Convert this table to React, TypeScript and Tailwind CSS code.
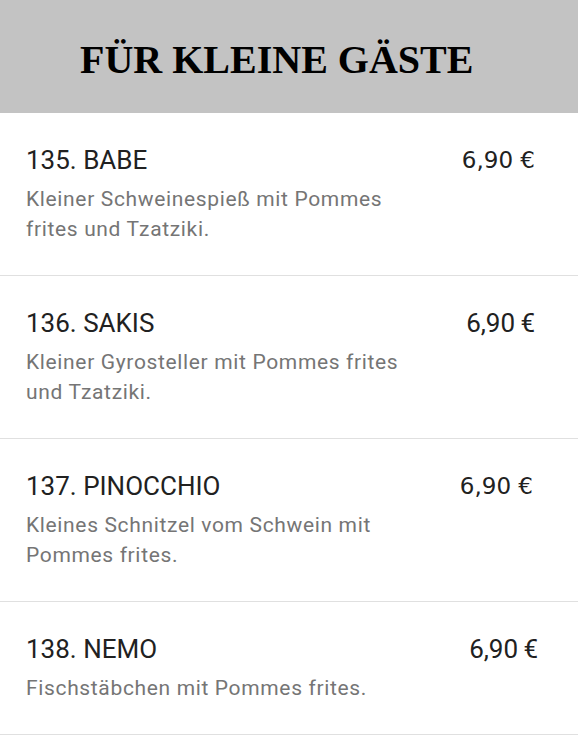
import React from "react";

type Item = {
  title: string;
  desc: string;
  price: string;
  priceFont: "dejavu" | "roboto";
  pr: string;
};

const items: Item[] = [
  {
    title: "135. BABE",
    desc: "Kleiner Schweinespieß mit Pommes frites und Tzatziki.",
    price: "6,90 €",
    priceFont: "dejavu",
    pr: "pr-[43px]",
  },
  {
    title: "136. SAKIS",
    desc: "Kleiner Gyrosteller mit Pommes frites und Tzatziki.",
    price: "6,90\u2009€",
    priceFont: "roboto",
    pr: "pr-[43px]",
  },
  {
    title: "137. PINOCCHIO",
    desc: "Kleines Schnitzel vom Schwein mit Pommes frites.",
    price: "6,90 €",
    priceFont: "dejavu",
    pr: "pr-[45px]",
  },
  {
    title: "138. NEMO",
    desc: "Fischstäbchen mit Pommes frites.",
    price: "6,90\u2009€",
    priceFont: "roboto",
    pr: "pr-[40px]",
  },
];

export default function App() {
  return (
    <div className="w-[578px] min-h-[735px] bg-white font-['Roboto',sans-serif]">
      <div className="h-[113px] bg-[#c3c3c3] flex items-center pl-[80px] pt-[6px]">
        <h1 className="font-['Liberation_Serif','Times_New_Roman',serif] font-bold text-[40px] leading-none text-black">
          FÜR KLEINE GÄSTE
        </h1>
      </div>
      {items.map((it) => (
        <div
          key={it.title}
          className="flex items-start border-b border-[#e0e0e0] pt-[32px] pb-[31px] pl-[26px]"
        >
          <div className="w-[412px] flex flex-col gap-[8px]">
            <div className="text-[26px] leading-[31px] text-[#212121]">{it.title}</div>
            <div className="text-[21px] leading-[30px] tracking-[0.65px] text-[#757575]">{it.desc}</div>
          </div>
          <div
            className={
              "flex-1 text-right leading-[31px] text-[#212121] " +
              it.pr +
              " " +
              (it.priceFont === "dejavu"
                ? "font-['DejaVu_Sans',sans-serif] text-[23px]"
                : "font-['Roboto',sans-serif] text-[26px]")
            }
          >
            {it.price}
          </div>
        </div>
      ))}
    </div>
  );
}
